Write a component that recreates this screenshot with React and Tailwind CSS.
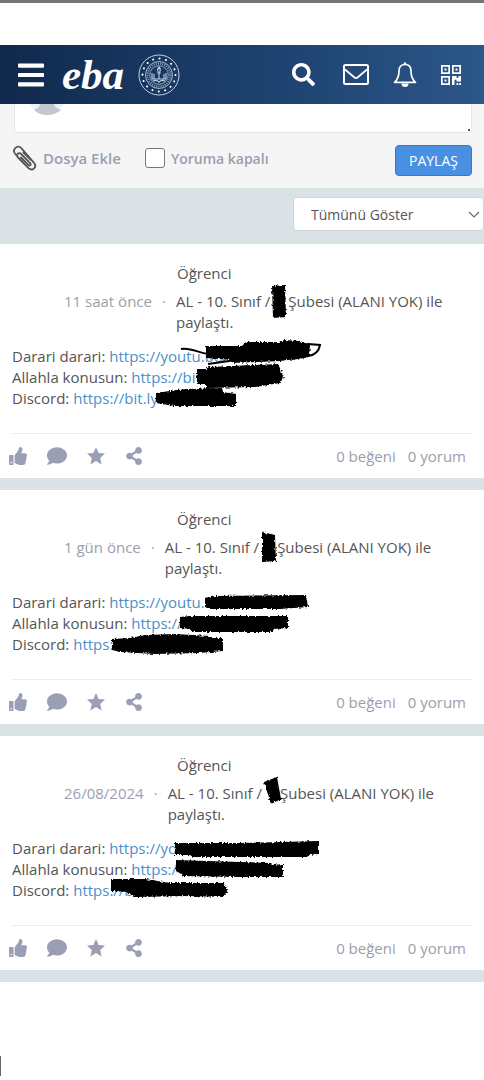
import React from 'react';
import { FaBars, FaSearch, FaThumbsUp, FaComment, FaShareAlt } from 'react-icons/fa';

const posts = [
  {
    id: 1,
    date: '11 saat önce',
    branchMark: 'M1 1L14 0L15 32L2 33Z',
    links: [
      { label: 'Darari darari:', url: 'https://youtu.be.' },
      { label: 'Allahla konusun:', url: 'https://bit.' },
      { label: 'Discord:', url: 'https://bit.ly' },
    ],
    marks: [
      'M206 102L242 102L246 98L279 98L284 96L300 97L310 101L309 113L296 115L280 117L232 119L231 116L206 114Z',
      'M197 125L206 125L209 123L278 120L284 133L280 139L255 143L206 144L206 140L197 140Z',
      'M156 149L170 147L186 145L222 144L223 148L236 150L236 162L174 162L156 159Z',
    ],
    stroke: 'M181 105C190 103 199 109 208 110M270 107L308 100L320 101C319 107 315 111 308 112L292 115M208 120L236 116',
  },
  {
    id: 2,
    date: '1 gün önce',
    branchMark: 'M2 1L15 4L16 30L2 31Z',
    links: [
      { label: 'Darari darari:', url: 'https://youtu.b' },
      { label: 'Allahla konusun:', url: 'https://' },
      { label: 'Discord:', url: 'https:/' },
    ],
    marks: [
      'M205 108L215 106L306 105L308 117L280 119L210 119L205 117Z',
      'M180 127L190 126L288 126L288 138L274 139L272 142L194 142L190 139L180 138Z',
      'M112 149L130 148L145 145L175 144L210 146L213 148L223 148L223 161L200 163L155 164L120 162L112 160Z',
    ],
  },
  {
    id: 3,
    date: '26/08/2024',
    branchMark: 'M1 5L14 0L18 22L8 27Z',
    links: [
      { label: 'Darari darari:', url: 'https://yo' },
      { label: 'Allahla konusun:', url: 'https:/' },
      { label: 'Discord:', url: 'https://b' },
    ],
    marks: [
      'M175 107L240 107L319 105L319 118L309 119L307 121L193 121L190 119L175 119Z',
      'M176 124L240 126L271 127L273 129L283 128L283 141L240 141L183 140L181 137L176 136Z',
      'M111 143L145 143L170 147L224 147L228 154L223 161L190 160L135 161L128 156L111 155Z',
    ],
  },
];

const Emblem = () => (
  <svg viewBox="0 0 42 42" className="h-[42px] w-[42px]" fill="none" stroke="#c3d0e2">
    <circle cx="21" cy="21" r="20" strokeWidth="1" />
    <circle cx="21" cy="21" r="16.5" stroke="#ffffff" strokeWidth="2" strokeLinecap="round" strokeDasharray="0.1 6.38" />
    <circle cx="21" cy="21" r="13.5" strokeWidth="0.8" />
    <circle cx="21" cy="21" r="11.5" strokeWidth="2.2" strokeDasharray="1 1.2" opacity="0.7" />
    <circle cx="21" cy="21" r="9.3" strokeWidth="0.7" />
    <path d="M21 13c-3 3 0 4-1 6h2c-1-2 2-3-1-6zM21 19v6M14 19v6h14v-6M16 20v5M26 20v5M15 27c2-1 4-1 6 1 2-2 4-2 6-1" strokeWidth="1.1" />
  </svg>
);

const EnvelopeIcon = () => (
  <svg viewBox="0 0 26 21" className="h-[21px] w-[26px]" fill="none" stroke="currentColor" strokeWidth="2">
    <rect x="1" y="1" width="24" height="19" rx="1.5" />
    <path d="M2 5.5l9.5 8q1.5 1.2 3 0l9.5-8" strokeWidth="1.7" />
  </svg>
);

const BellIcon = () => (
  <svg viewBox="0 0 24 26" className="h-[26px] w-6" fill="none" stroke="currentColor" strokeWidth="1.7" strokeLinejoin="round">
    <path d="M12 2.5c-4 0-6 2.8-6 6.5 0 5-.8 8.200-4.500 11.300h21c-3.700-3.100-4.500-6.300-4.500-11.300 0-3.700-2-6.500-6-6.500z" />
    <path d="M12 .5v2" strokeWidth="2.4" />
    <path d="M8.500 21.500a3.500 3.500 0 0 0 7 0z" fill="currentColor" stroke="none" />
  </svg>
);

const QrIcon = () => (
  <svg viewBox="0 0 20 20" className="h-5 w-5" fill="currentColor">
    <path fillRule="evenodd" d="M0 0h9v9H0zM1.700 1.700v5.600h5.600V1.700zM11 0h9v9h-9zM12.700 1.700v5.600h5.600V1.700zM0 11h9v9H0zM1.700 12.700v5.600h5.600v-5.600z" />
    <path d="M3.500 3.500h2v2h-2zM14.500 3.500h2v2h-2zM3.500 14.500h2v2h-2zM11 11h4.500v1.700h2V11H20v5.500h-4.500v-1.700h-2V20H11zM15.500 18h1.800v2h-1.800zM18.200 18H20v2h-1.800z" />
  </svg>
);

const PaperclipIcon = () => (
  <svg viewBox="0 0 24 26" className="h-[26px] w-6 shrink-0" fill="none" stroke="#555" strokeWidth="1.8" strokeLinecap="round">
    <path d="M8 12.500l7.500 7.700c1.200 1.200 3-.5 1.800-1.800L8.200 9C5.600 6.600 2.500 10 5 12.500l10.500 10.700c4 3.600 9-1.600 5.500-5.400L8.500 3.300C4.500-.8-1.500 4.500 2.300 9l1.700 1.800M10.500 7.500l7 7.200" />
  </svg>
);

const StarIcon = () => (
  <svg viewBox="0 0 18 18" className="h-[18px] w-[18px]" fill="currentColor">
    <path d="M9 0l2.600 6 6.400.6-4.800 4.300L14.600 17.500 9 14.100l-5.600 3.400 1.400-6.600L0 6.600 6.400 6z" />
  </svg>
);

const Header = () => (
  <header className="flex h-[59px] items-center bg-linear-to-r from-[#10294c] via-[#1c3f6c] to-[#2b5789] pr-[23px] pl-[18px] text-white">
    <button type="button" aria-label="Menü">
      <FaBars className="h-[30px] w-[26px]" preserveAspectRatio="none" />
    </button>
    <a href="#" className="ml-[18px] font-['Liberation_Serif',serif] text-[43px] leading-[56px] font-bold italic">eba</a>
    <a href="#" aria-label="Bakanlık" className="ml-[14px]">
      <Emblem />
    </a>
    <div className="ml-auto flex items-center">
      <button type="button" aria-label="Ara"><FaSearch size={23} /></button>
      <button type="button" aria-label="Mesajlar" className="ml-7"><EnvelopeIcon /></button>
      <button type="button" aria-label="Bildirimler" className="ml-6"><BellIcon /></button>
      <button type="button" aria-label="Karekod" className="ml-6"><QrIcon /></button>
    </div>
  </header>
);

const Composer = () => (
  <section className="bg-[#f5f5f5] pb-3">
    <div className="relative mr-3 ml-[14px]">
      <textarea
        aria-label="Paylaşım"
        className="block h-[29px] w-full resize-none rounded-b border border-t-0 border-[#e4e6e8] bg-white"
      />
      <svg viewBox="0 0 34 12" className="absolute top-0 left-[16px] h-3 w-[34px]">
        <path d="M0 0h34q-5 9-17 11Q5 9 0 0z" fill="#eef0f7" />
        <path d="M10 0h14l1 3 6 3q-6 5-14 5T4 6l5-3z" fill="#c2c8d0" />
      </svg>
      <span className="absolute right-[2px] bottom-[2px] h-[2px] w-[2px] bg-gray-600" />
    </div>
    <div className="flex items-start pr-3 pl-[13px] pt-3 font-semibold text-[#9b9eb0]">
      <button type="button" className="flex items-center gap-[6px] text-[15px]">
        <PaperclipIcon />
        Dosya Ekle
      </button>
      <label className="ml-6 flex h-[26px] items-center gap-[6px] text-[14px]">
        <input type="checkbox" className="h-5 w-5 appearance-none rounded-[3px] border border-[#777] bg-white" />
        Yoruma kapalı
      </label>
      <button type="button" className="ml-auto h-[31px] w-[77px] rounded border border-[#3d78ba] bg-[#4a90e2] text-[14px] font-normal text-white">
        PAYLAŞ
      </button>
    </div>
  </section>
);

const Filter = () => (
  <div className="flex h-14 items-center justify-end bg-[#dae2e6] pb-1">
    <div className="relative w-[191px]">
      <select aria-label="Filtre" className="h-[34px] w-full appearance-none rounded border border-[#d0d5d9] bg-white pl-[17px] text-[14px] text-[#555]">
        <option>Tümünü Göster</option>
      </select>
      <svg viewBox="0 0 12 8" className="pointer-events-none absolute top-[14px] right-1 h-2 w-3" fill="none" stroke="#666" strokeWidth="1.1">
        <path d="M1 1l5 5 5-5" />
      </svg>
    </div>
  </div>
);

const Post = ({ post }) => (
  <article className="relative border-b-12 border-[#dae2e6] bg-white pr-3 pl-3 pt-[19px]">
    <p className="pl-[165px]">Öğrenci</p>
    <div className="mt-[7px] flex pl-[52px]">
      <span className="shrink-0 text-[#9b9eb0]">{post.date}</span>
      <span className="w-6 shrink-0 text-center text-[#9b9eb0]">·</span>
      <p>
        <span>AL - 10. Sınıf /</span>
        <span className="relative inline-block w-[18px]">
          <svg viewBox="0 0 18 34" className="absolute -top-[22px] left-px h-[34px] w-[18px] overflow-visible">
            <path d={post.branchMark} filter="url(#rough)" />
          </svg>
        </span>
        <span>Şubesi (ALANI YOK) ile</span> <span>paylaştı.</span>
      </p>
    </div>
    <div className="mt-[13px]">
      {post.links.map((link) => (
        <p key={link.label}>
          {link.label} <a href="#" className="text-[#4b8fca]">{link.url}</a>
        </p>
      ))}
    </div>
    <svg viewBox="0 0 330 180" className="pointer-events-none absolute top-0 left-0 h-[180px] w-[330px]">
      {post.marks.map((d) => <path key={d} d={d} filter="url(#rough)" />)}
      {post.stroke && <path d={post.stroke} fill="none" stroke="#000" strokeWidth="2" />}
    </svg>
    <footer className="mt-6 flex h-[45px] items-center border-t border-[#ebedf0] text-[#9a9fb5]">
      <div className="-ml-[3px] flex items-center">
        <button type="button" aria-label="Beğen"><FaThumbsUp size={18} /></button>
        <button type="button" aria-label="Yorum yap" className="ml-5"><FaComment size={20} /></button>
        <button type="button" aria-label="Favori" className="ml-5"><StarIcon /></button>
        <button type="button" aria-label="Paylaş" className="ml-5"><FaShareAlt size={18} /></button>
      </div>
      <div className="ml-auto flex gap-3 pr-[6px] text-[#9b9eaa]">
        <span>0 beğeni</span>
        <span>0 yorum</span>
      </div>
    </footer>
  </article>
);

export default function App() {
  return (
    <div className="relative min-h-screen border-t-3 border-[#757575] bg-white pt-[42px] font-['Open_Sans',sans-serif] text-[15px] leading-[21px] text-[#555]">
      {/* rough brush edge */}
      <svg className="absolute h-0 w-0" aria-hidden="true">
        <filter id="rough">
          <feTurbulence type="fractalNoise" baseFrequency="0.5" numOctaves="2" result="noise" />
          <feDisplacementMap in="SourceGraphic" in2="noise" scale="4" xChannelSelector="R" yChannelSelector="G" />
        </filter>
      </svg>
      <Header />
      <main>
        <Composer />
        <Filter />
        {posts.map((post) => <Post key={post.id} post={post} />)}
      </main>
      <div className="absolute bottom-1 left-0 h-5 w-px bg-[#666]" />
    </div>
  );
}
